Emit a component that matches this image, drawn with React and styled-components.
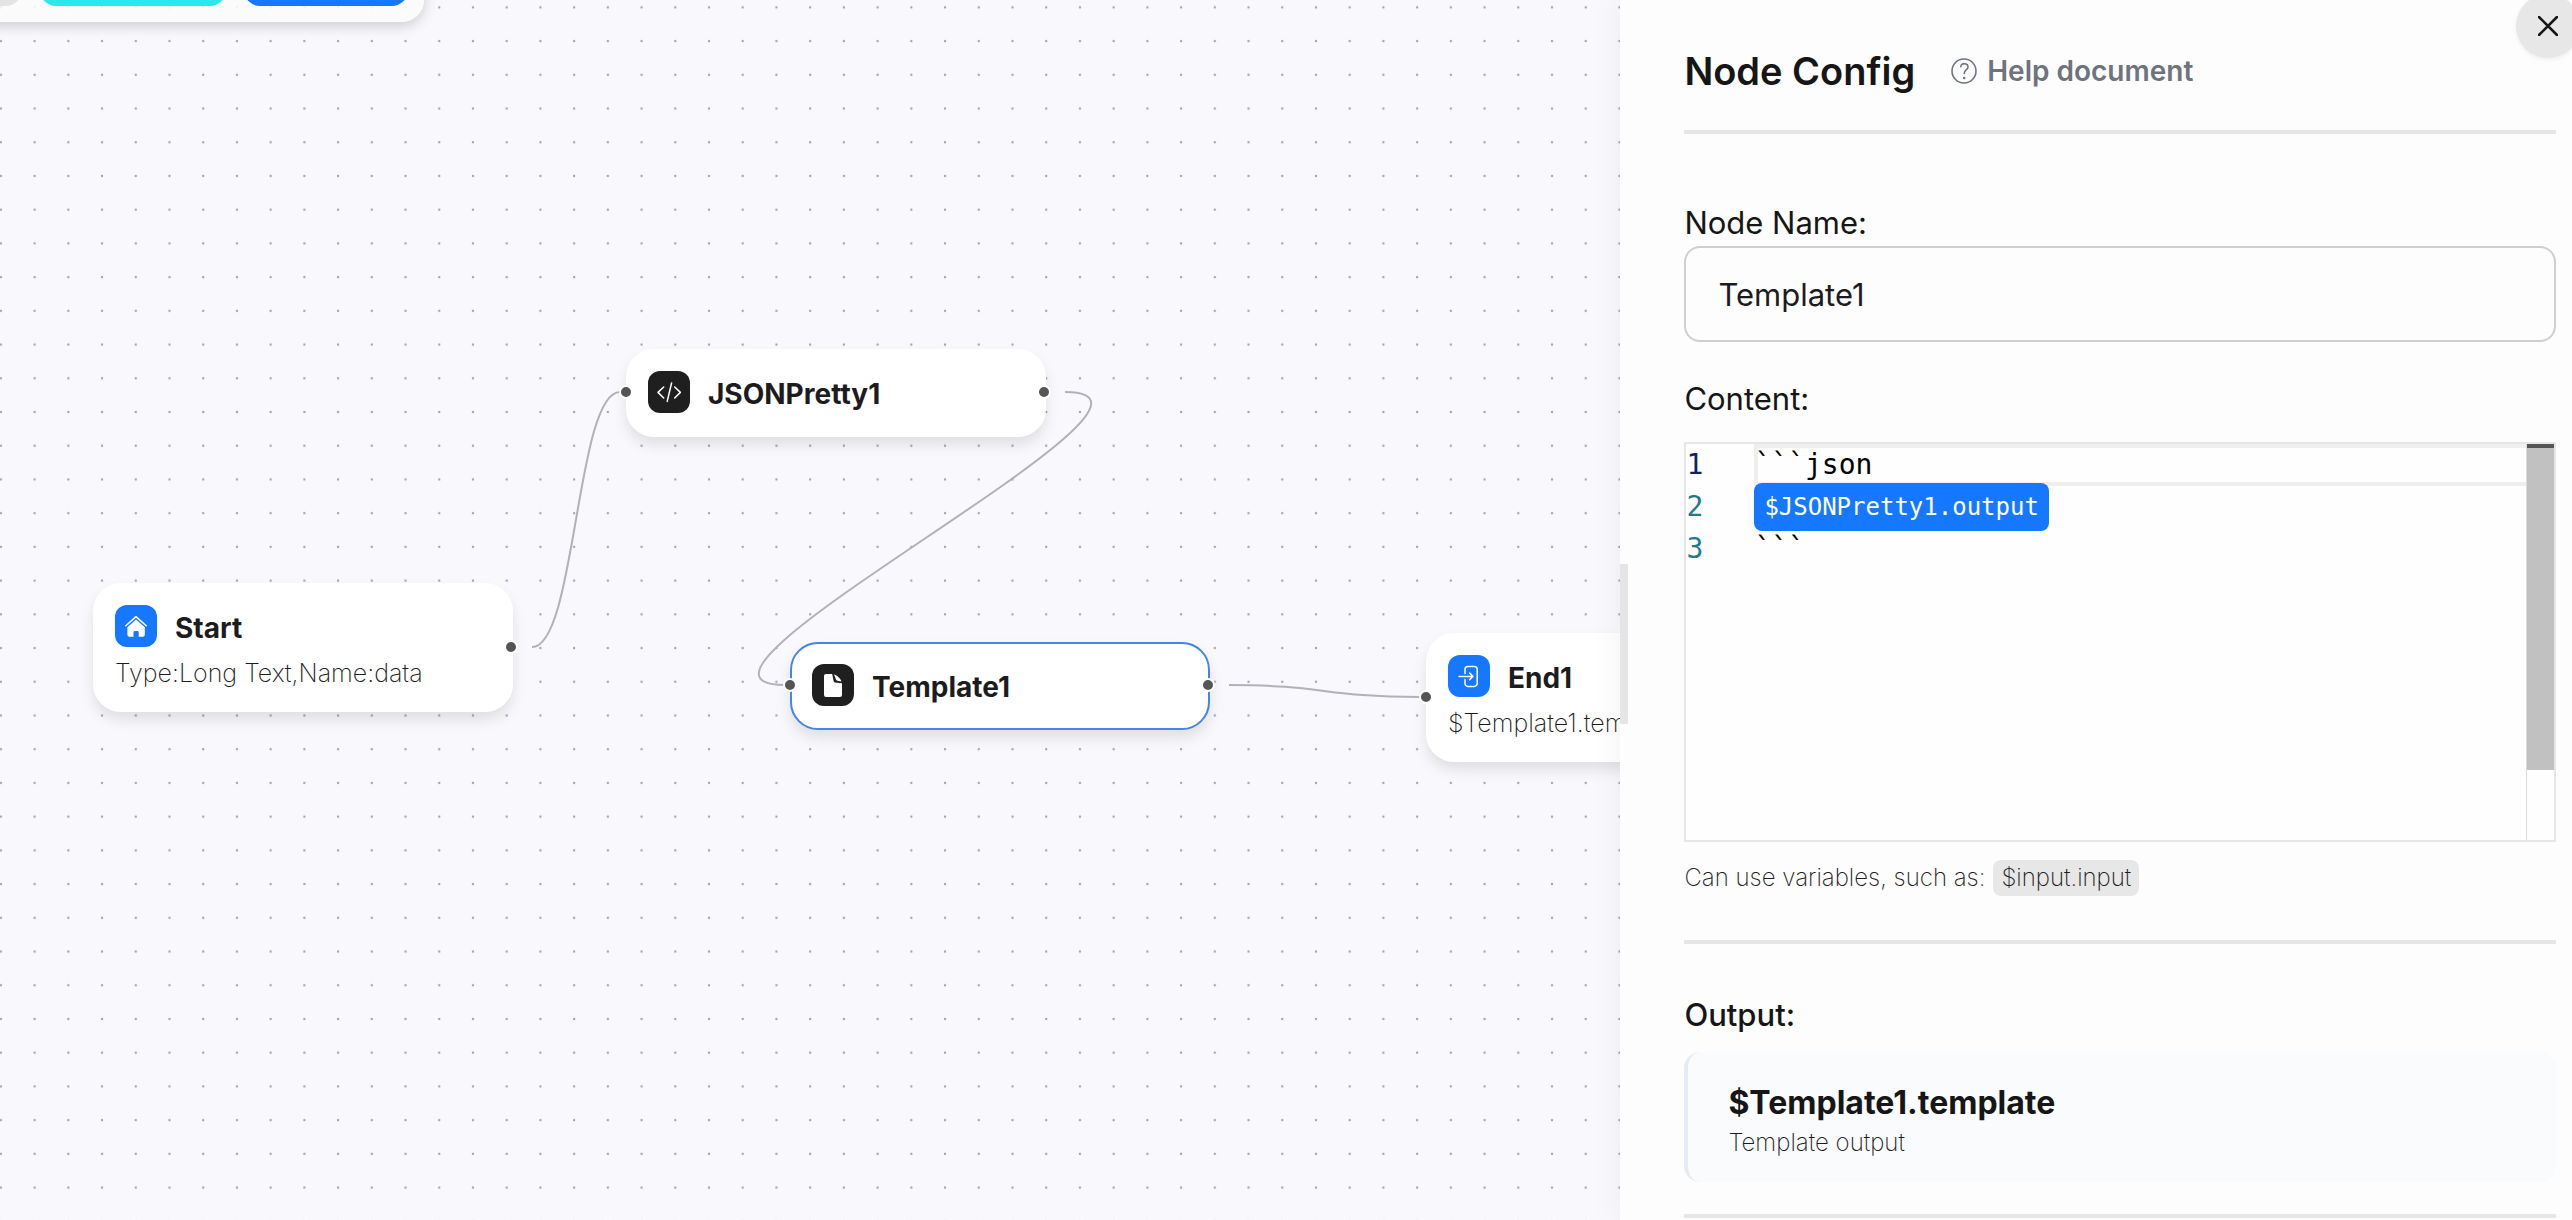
import React, { useState } from "react";
import styled, { createGlobalStyle, css } from "styled-components";

const GlobalStyle = createGlobalStyle`
  *, *::before, *::after { box-sizing: border-box; }
  body {
    margin: 0;
    background: #f9f8fd;
    color: #1c1c1e;
    font-family: Inter, "Liberation Sans", sans-serif;
  }
  button, input { font: inherit; color: inherit; }
`;

const ZOOM = 1.686;

const Layout = styled.div`
  display: flex;
  height: 100vh;
  overflow: hidden;
`;

const Canvas = styled.main`
  position: relative;
  flex: 1;
  min-width: 0;
  overflow: hidden;
`;

const CanvasLayer = styled.svg`
  position: absolute;
  inset: 0;
  width: 100%;
  height: 100%;
`;

const Toolbar = styled.nav`
  position: absolute;
  top: -58px;
  left: -162px;
  display: flex;
  gap: 18px;
  padding: 16px;
  border-radius: 22px;
  background: rgba(250, 250, 250, 0.88);
  box-shadow: 0 4px 14px rgba(0, 0, 0, 0.18);
`;

const ToolButton = styled.button`
  width: ${(p) => p.$width}px;
  height: 48px;
  border: 0;
  border-radius: 16px;
  background: ${(p) => p.$color};
`;

const NodeCard = styled.article`
  position: absolute;
  left: ${(p) => p.$x}px;
  top: ${(p) => p.$y}px;
  width: 420px;
  padding: 20px;
  border: 2px solid ${(p) => (p.$selected ? "#4584e8" : "#ffffff")};
  border-radius: 28px;
  background: #ffffff;
  box-shadow: 0 8px 14px rgba(0, 0, 0, 0.1);
`;

const NodeHeader = styled.header`
  display: flex;
  align-items: flex-start;
  gap: 18px;
`;

const NodeIcon = styled.span`
  display: block;
  width: 42px;
  height: 42px;
  border-radius: 12px;
  background: ${(p) => (p.$dark ? "#1f1f1f" : "#1677ff")};
  svg { display: block; }
`;

const NodeTitle = styled.h2`
  margin: 0;
  padding-top: 2px;
  font-size: 28px;
  line-height: 42px;
  font-weight: 700;
`;

const NodeText = styled.p`
  margin: 8px 0 0;
  white-space: nowrap;
  font-size: 25px;
  line-height: 33px;
  font-weight: 200;
`;

const Port = styled.i`
  position: absolute;
  top: 50%;
  ${(p) => (p.$side === "left" ? css`left: -9px;` : css`right: -7px;`)}
  width: 14px;
  height: 14px;
  margin-top: -8px;
  border: 2px solid #ffffff;
  border-radius: 50%;
  background: #555555;
`;

const Panel = styled.aside`
  position: relative;
  width: 37%;
  padding: 44px 16px 0 64px;
  background: #fefdfe;
  box-shadow: 0 0 32px rgba(0, 0, 0, 0.06);
`;

const ResizeHandle = styled.div`
  position: absolute;
  left: 0;
  top: 564px;
  width: 8px;
  height: 160px;
  background: #e5e5e5;
  cursor: col-resize;
`;

const CloseButton = styled.button`
  position: absolute;
  top: -6px;
  right: -8px;
  display: grid;
  place-items: center;
  width: 64px;
  height: 64px;
  padding: 0;
  border: 0;
  border-radius: 50%;
  background: #e7e7e7;
  box-shadow: 0 2px 4px rgba(0, 0, 0, 0.06);
`;

const PanelHeader = styled.header`
  display: flex;
  align-items: center;
  gap: 36px;
  height: 54px;
`;

const PanelTitle = styled.h1`
  margin: 0;
  font-size: 38px;
  line-height: 54px;
  font-weight: 600;
  color: #161616;
`;

const HelpLink = styled.a`
  display: flex;
  align-items: center;
  gap: 10px;
  font-size: 28px;
  line-height: 40px;
  font-weight: 600;
  color: #6e737d;
  text-decoration: none;
`;

const Divider = styled.hr`
  height: 4px;
  margin: ${(p) => p.$top}px 0 0;
  border: 0;
  background: #e6e6e6;
`;

const Field = styled.section`
  display: flex;
  flex-direction: column;
  margin-top: ${(p) => p.$top}px;
`;

const labelText = css`
  font-size: 31px;
  line-height: 46px;
  font-weight: 400;
  color: #161616;
`;

const Label = styled.label`
  ${labelText}
`;

const Caption = styled.h3`
  ${labelText}
  margin: 0;
  font-weight: ${(p) => (p.$strong ? 500 : 400)};
`;

const TextInput = styled.input`
  width: 100%;
  height: 96px;
  padding: 0 32px;
  border: 2px solid #d0cecf;
  border-radius: 16px;
  outline: 0;
  background: #fefdfe;
  font-size: 31px;
`;

const Editor = styled.div`
  display: flex;
  height: 400px;
  margin-top: 20px;
  border: 2px solid #e6e6e6;
  background: #fefefe;
`;

const CodeLines = styled.div`
  flex: 1;
  min-width: 0;
  outline: 0;
  font-family: "DejaVu Sans Mono", "Liberation Mono", monospace;
  font-size: 28px;
  line-height: 42px;
  color: #000000;
`;

const CodeLine = styled.div`
  display: grid;
  grid-template-columns: 68px 1fr;
  height: 42px;
`;

const LineNumber = styled.span`
  color: ${(p) => (p.$active ? "#0b216f" : "#237893")};
`;

const LineBody = styled.span`
  display: flex;
  align-items: center;
  height: 42px;
  box-shadow: ${(p) =>
    p.$active ? "inset 4px 0 #eeeeee, inset 0 4px #f0f0f0, inset 0 -4px #eeeeee" : "none"};
`;

const VariableTag = styled.span`
  position: relative;
  height: 48px;
  padding: 0 10px;
  border-radius: 8px;
  background: #1677ff;
  color: #ffffff;
  font-size: 24px;
  line-height: 48px;
`;

const ScrollTrack = styled.div`
  width: 28px;
  border-left: 1px solid #dcdcdc;
`;

const ScrollThumb = styled.div`
  height: 326px;
  border-top: 4px solid #555555;
  background: #c1c1c1;
`;

const Hint = styled.p`
  display: flex;
  align-items: center;
  gap: 8px;
  margin: 18px 0 0;
  font-size: 24px;
  line-height: 36px;
  font-weight: 200;
`;

const InlineCode = styled.code`
  padding: 0 8px;
  border-radius: 8px;
  background: #e7e7e7;
  font-family: inherit;
`;

const OutputCard = styled.div`
  height: 130px;
  margin-top: 14px;
  padding: 29px 40px;
  border-left: 4px solid #e4ebf4;
  border-radius: 16px;
  background: #f9fbfd;
`;

const OutputName = styled.strong`
  display: block;
  font-size: 32px;
  line-height: 44px;
  font-weight: 700;
  color: #161616;
`;

const OutputNote = styled.span`
  display: block;
  font-size: 24px;
  line-height: 36px;
  font-weight: 200;
`;

const HomeIcon = () => (
  <svg width="42" height="42" viewBox="0 0 42 42" fill="none">
    <path d="M10.8 20.8 L21 11.6 L31.2 20.8" stroke="#fff" strokeWidth="1.5" strokeLinecap="round" strokeLinejoin="round" />
    <path d="M12.4 22.2 L21 14.6 L29.8 22.2 V29.7 a2 2 0 0 1 -2 2 H23.7 V27.2 a1.2 1.2 0 0 0 -1.2 -1.2 H19.7 a1.2 1.2 0 0 0 -1.2 1.2 V31.7 H14.4 a2 2 0 0 1 -2 -2 Z" fill="#fff" />
  </svg>
);

const CodeIcon = () => (
  <svg width="42" height="42" viewBox="0 0 42 42" fill="none" stroke="#fff" strokeWidth="1.5" strokeLinecap="round" strokeLinejoin="round">
    <path d="M15.7 16 L10 21.4 L15.7 27 M26.7 16 L32.4 21.4 L26.7 27 M23.6 12 L19.2 30.4" />
  </svg>
);

const FileIcon = () => (
  <svg width="42" height="42" viewBox="0 0 42 42" fill="#fff">
    <path d="M14 10 H20.2 L21.6 17 a1.6 1.6 0 0 0 1.4 1.4 L30 19.2 V31 a2 2 0 0 1 -2 2 H14 a2 2 0 0 1 -2 -2 V12 a2 2 0 0 1 2 -2 Z" />
    <path d="M22 10.4 C25 11 28.6 14.4 29.6 17.6 L25.4 16.8 C24 16.4 23.8 15 23.4 14 Z" />
  </svg>
);

const ExitIcon = () => (
  <svg width="42" height="42" viewBox="0 0 42 42" fill="none" stroke="#fff" strokeWidth="1.5" strokeLinecap="round" strokeLinejoin="round">
    <path d="M17 18.4 V14.4 a3 3 0 0 1 3 -3 H26.2 a3 3 0 0 1 3 3 V28.4 a3 3 0 0 1 -3 3 H20 a3 3 0 0 1 -3 -3 V24.4" />
    <path d="M11 21.4 H25 M21.6 18 L25 21.4 L21.6 24.8" />
  </svg>
);

const HelpIcon = () => (
  <svg width="26" height="26" viewBox="0 0 26 26" fill="none" stroke="#6e737d" strokeWidth="1.6" strokeLinecap="round">
    <circle cx="13" cy="13" r="12" />
    <path d="M9.8 8.8 C9.8 4.6 17 4.6 17 9 C17 12 13.2 11.8 13.2 15.4" />
    <circle cx="13.2" cy="20" r="0.5" fill="#6e737d" />
  </svg>
);

const CloseIcon = () => (
  <svg width="20" height="20" viewBox="0 0 20 20" stroke="#161616" strokeWidth="2.6" strokeLinecap="round">
    <path d="M1 1 L19 19 M19 1 L1 19" />
  </svg>
);

const nodes = [
  { id: "start", x: 93, y: 583, title: "Start", text: "Type:Long Text,Name:data", Icon: HomeIcon, ports: ["right"] },
  { id: "json", x: 626, y: 349, title: "JSONPretty1", Icon: CodeIcon, dark: true, ports: ["left", "right"] },
  { id: "template", x: 790, y: 642, title: "Template1", Icon: FileIcon, dark: true, selected: true, ports: ["left", "right"] },
  { id: "end", x: 1426, y: 633, title: "End1", text: "$Template1.template", Icon: ExitIcon, ports: ["left"] },
];

const edges = [
  "M532 647 C576 647 576 392 620 392",
  "M1065 392 C1220 392 630 685 785 685",
  "M1229 685 C1324 685 1324 697 1420 697",
];

function FlowNode({ node }) {
  const { Icon } = node;
  return (
    <NodeCard $x={node.x} $y={node.y} $selected={node.selected}>
      <NodeHeader>
        <NodeIcon $dark={node.dark}><Icon /></NodeIcon>
        <NodeTitle>{node.title}</NodeTitle>
      </NodeHeader>
      {node.text && <NodeText>{node.text}</NodeText>}
      {node.ports.map((side) => <Port key={side} $side={side} />)}
    </NodeCard>
  );
}

export default function App() {
  const [name, setName] = useState("Template1");
  const gap = 20 * ZOOM;

  return (
    <>
      <GlobalStyle />
      <Layout>
        <Canvas>
          <CanvasLayer>
            <defs>
              <pattern id="dots" x="-16" y="-9.5" width={gap} height={gap} patternUnits="userSpaceOnUse">
                <circle cx="16.9" cy="16.9" r="1.2" fill="#a4a4ab" />
              </pattern>
            </defs>
            <rect width="100%" height="100%" fill="url(#dots)" />
            {edges.map((d) => (
              <path key={d} d={d} fill="none" stroke="#b1b1b7" strokeWidth="2" />
            ))}
          </CanvasLayer>
          {nodes.map((node) => <FlowNode key={node.id} node={node} />)}
          <Toolbar>
            <ToolButton $width={168} $color="#e4e4e4" aria-label="Back" />
            <ToolButton $width={186} $color="#2ce8ea" aria-label="Run" />
            <ToolButton $width={164} $color="#1677ff" aria-label="Save" />
          </Toolbar>
        </Canvas>

        <Panel>
          <ResizeHandle />
          <CloseButton type="button" aria-label="Close"><CloseIcon /></CloseButton>
          <PanelHeader>
            <PanelTitle>Node Config</PanelTitle>
            <HelpLink href="#help"><HelpIcon />Help document</HelpLink>
          </PanelHeader>
          <Divider $top={32} />

          <Field $top={66}>
            <Label htmlFor="node-name">Node Name:</Label>
            <TextInput id="node-name" value={name} onChange={(e) => setName(e.target.value)} />
          </Field>

          <Field $top={34}>
            <Caption id="content-label">Content:</Caption>
            <Editor>
              <CodeLines role="textbox" aria-multiline="true" aria-labelledby="content-label" tabIndex={0}>
                <CodeLine>
                  <LineNumber $active>1</LineNumber>
                  <LineBody $active>```json</LineBody>
                </CodeLine>
                <CodeLine>
                  <LineNumber>2</LineNumber>
                  <LineBody><VariableTag>$JSONPretty1.output</VariableTag></LineBody>
                </CodeLine>
                <CodeLine>
                  <LineNumber>3</LineNumber>
                  <LineBody>```</LineBody>
                </CodeLine>
              </CodeLines>
              <ScrollTrack><ScrollThumb /></ScrollTrack>
            </Editor>
            <Hint>Can use variables, such as:<InlineCode>$input.input</InlineCode></Hint>
          </Field>
          <Divider $top={44} />

          <Field $top={48}>
            <Caption $strong>Output:</Caption>
            <OutputCard>
              <OutputName>$Template1.template</OutputName>
              <OutputNote>Template output</OutputNote>
            </OutputCard>
          </Field>
          <Divider $top={32} />
        </Panel>
      </Layout>
    </>
  );
}
